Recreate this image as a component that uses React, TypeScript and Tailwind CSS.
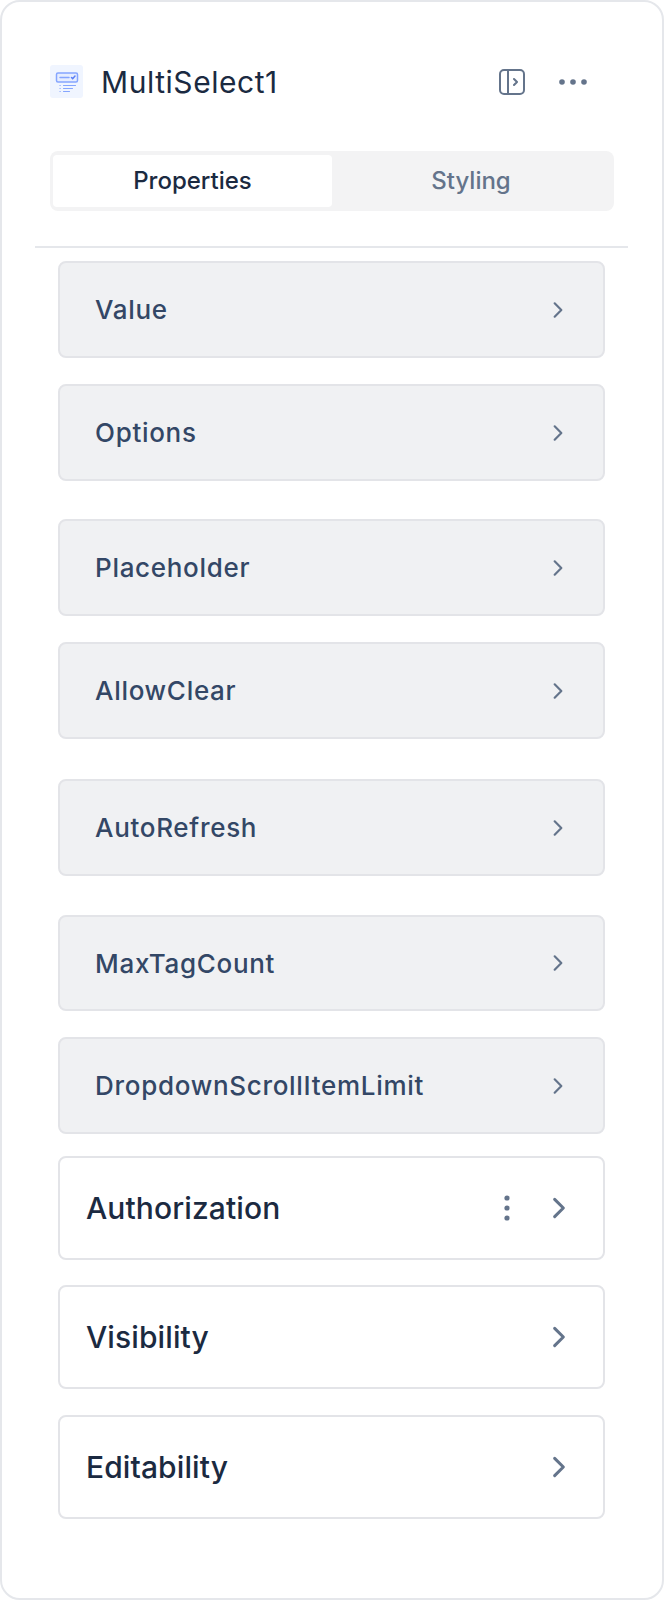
const grayRows = [
  { label: "Value", mt: "mt-0", h: "h-[97px]" },
  { label: "Options", mt: "mt-[26px]", h: "h-[97px]" },
  { label: "Placeholder", mt: "mt-[38px]", h: "h-[97px]" },
  { label: "AllowClear", mt: "mt-[26px]", h: "h-[97px]" },
  { label: "AutoRefresh", mt: "mt-[40px]", h: "h-[97px]" },
  { label: "MaxTagCount", mt: "mt-[39px]", h: "h-[96px]" },
  { label: "DropdownScrollItemLimit", mt: "mt-[26px]", h: "h-[97px]" },
];

function Chevron({ className }: { className: string }) {
  return (
    <svg viewBox="0 0 24 24" fill="none" stroke="currentColor" strokeLinecap="round" strokeLinejoin="round" className={className}>
      <path d="M8 4l8 8-8 8" />
    </svg>
  );
}

function SelectIcon() {
  return (
    <div className="flex h-[33px] w-[33px] items-center justify-center rounded-[3px] bg-[#f0f5ff]">
      <svg viewBox="0 0 24 24" width="24" height="24" fill="none" stroke="#85a5ff" strokeWidth="1.5" strokeLinecap="round">
        <rect x="1.5" y="3" width="21" height="9" rx="1.5" fill="#e6edff" />
        <path d="M5 7.5h9" />
        <path d="M16.5 7.5l1.2 1.2 2.3-2.6" stroke="#597ef7" />
        <path d="M5 15.5h.2M8.5 15.5h12M5 18.5h.2M8.5 18.5h9M5 21.5h.2M8.5 21.5h6" strokeWidth="1.2" />
      </svg>
    </div>
  );
}

export default function App() {
  return (
    <div className="h-[1600px] w-[664px] overflow-hidden rounded-[20px] border-2 border-[#e5e7eb] bg-white font-['Inter',sans-serif]">
      <header className="ml-[48px] mr-[75px] mt-[63px] flex h-[33px] items-center">
        <SelectIcon />
        <h1 className="ml-[18px] text-[30px] font-normal leading-none tracking-[0.55px] text-[#1b2a41]">MultiSelect1</h1>
        <svg viewBox="0 0 26 26" width="26" height="26" fill="none" stroke="#64748b" strokeWidth="2" strokeLinecap="round" strokeLinejoin="round" className="ml-auto">
          <rect x="1" y="1" width="24" height="24" rx="4" />
          <path d="M9 1v24M15 10l3 3-3 3" />
        </svg>
        <svg viewBox="0 0 28 6" width="28" height="6" fill="#64748b" className="ml-[34px]">
          <circle cx="3" cy="3" r="2.8" />
          <circle cx="14" cy="3" r="2.8" />
          <circle cx="25" cy="3" r="2.8" />
        </svg>
      </header>

      <div className="ml-[48px] mt-[53px] flex h-[60px] w-[564px] rounded-[8px] bg-[#f3f3f4] p-[4px] pl-[3px]">
        <div className="flex w-[279px] items-center justify-center rounded-[4px] bg-white text-[24px] font-medium text-[#1b2a41]">
          Properties
        </div>
        <div className="flex flex-1 items-center justify-center text-[24px] font-medium text-[#64748b]">Styling</div>
      </div>

      <div className="ml-[33px] mt-[35px] h-[2px] w-[593px] bg-[#e5e7eb]" />

      <div className="ml-[56px] mt-[13px] w-[547px]">
        {grayRows.map((row) => (
          <div
            key={row.label}
            className={`${row.mt} ${row.h} flex items-center justify-between rounded-[8px] border-2 border-[#e3e4e8] bg-[#f0f1f3] pl-[35px] pr-[35px]`}
          >
            <span className="text-[26px] font-medium tracking-[0.7px] text-[#334766]">{row.label}</span>
            <Chevron className="h-[20px] w-[20px] stroke-[2.6] text-[#64748b]" />
          </div>
        ))}

        <div className="mt-[22px] flex h-[104px] items-center rounded-[8px] border-2 border-[#e3e4e8] bg-white pl-[26px] pr-[31px]">
          <span className="text-[30px] font-medium tracking-[0.1px] text-[#1b2a41]">Authorization</span>
          <svg viewBox="0 0 6 26" width="6" height="26" fill="#64748b" className="ml-auto mr-[36px]">
            <circle cx="3" cy="3" r="2.6" />
            <circle cx="3" cy="13" r="2.6" />
            <circle cx="3" cy="23" r="2.6" />
          </svg>
          <Chevron className="h-[26px] w-[26px] stroke-[2.8] text-[#64748b]" />
        </div>
        <div className="mt-[25px] flex h-[104px] items-center justify-between rounded-[8px] border-2 border-[#e3e4e8] bg-white pl-[26px] pr-[31px]">
          <span className="text-[30px] font-medium tracking-[0.1px] text-[#1b2a41]">Visibility</span>
          <Chevron className="h-[26px] w-[26px] stroke-[2.8] text-[#64748b]" />
        </div>
        <div className="mt-[26px] flex h-[104px] items-center justify-between rounded-[8px] border-2 border-[#e3e4e8] bg-white pl-[26px] pr-[31px]">
          <span className="text-[30px] font-medium tracking-[0.1px] text-[#1b2a41]">Editability</span>
          <Chevron className="h-[26px] w-[26px] stroke-[2.8] text-[#64748b]" />
        </div>
      </div>
    </div>
  );
}
